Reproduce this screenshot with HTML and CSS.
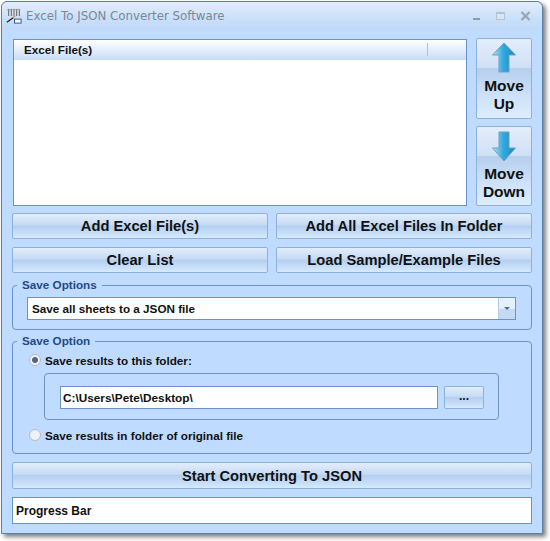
FILE: index.html
```html
<!DOCTYPE html>
<html lang="en">

<head>
    <meta charset="UTF-8">
    <title>Excel To JSON Converter Software</title>
    <link rel="stylesheet" href="styles.css">
</head>

<body>
    <div class="window">
        <div class="title-bar">
            <svg class="app-icon" width="16" height="16" viewBox="0 0 18 18">
                <path d="M3 1v8M6 1v8M9 1v8M12 1v8M15 1v8" stroke="#555" stroke-width="1"/>
                <path d="M1 2h15" stroke="#999" stroke-width="1"/>
                <path d="M8 7l3 2-3 3z" fill="#f09a20"/>
                <path d="M1 16l7-5" stroke="#222" stroke-width="1.4"/>
                <rect x="9.5" y="12.5" width="7.5" height="4.5" fill="#fff" stroke="#1c4f8c"/>
            </svg>
            <span class="title-text">Excel To JSON Converter Software</span>
            <div class="window-controls">
                <svg width="10" height="10" viewBox="0 0 10 10"><rect x="1" y="7" width="7" height="2" fill="#8d9bae"/></svg>
                <svg width="10" height="10" viewBox="0 0 10 10"><rect x="0.5" y="1.5" width="8" height="7" fill="#dbe6f5" stroke="#b4c2d4"/><rect x="0" y="1" width="9" height="2" fill="#b4c2d4"/></svg>
                <svg width="11" height="10" viewBox="0 0 11 10"><path d="M1.5 1l8 8M9.5 1l-8 8" stroke="#96a4b6" stroke-width="2.2"/></svg>
            </div>
        </div>

        <div class="content">
            <div class="list-row">
                <div class="file-list">
                    <div class="list-header"><span>Excel File(s)</span></div>
                </div>
                <div class="move-buttons">
                    <button class="btn move-btn">
                        <svg width="26" height="32" viewBox="0 0 26 32">
                            <defs>
                                <linearGradient id="arrowFill" x1="0" x2="1" y1="0" y2="0">
                                    <stop offset="0" stop-color="#b5e6f6"/>
                                    <stop offset="0.45" stop-color="#35aade"/>
                                    <stop offset="1" stop-color="#1487c4"/>
                                </linearGradient>
                            </defs>
                            <path d="M13 1L24.5 13H18V30H8V13H1.500z" fill="url(#arrowFill)" stroke="#6f9fc2"/>
                        </svg>
                        <span>Move<br>Up</span>
                    </button>
                    <button class="btn move-btn">
                        <svg width="26" height="32" viewBox="0 0 26 32">
                            <path d="M13 31L24.5 18H18V2H8V18H1.500z" fill="url(#arrowFill)" stroke="#6f9fc2"/>
                        </svg>
                        <span>Move<br>Down</span>
                    </button>
                </div>
            </div>

            <div class="button-grid">
                <button class="btn">Add Excel File(s)</button>
                <button class="btn">Add All Excel Files In Folder</button>
                <button class="btn">Clear List</button>
                <button class="btn">Load Sample/Example Files</button>
            </div>

            <fieldset class="group options-group">
                <legend>Save Options</legend>
                <div class="select-box">
                    <span class="select-value">Save all sheets to a JSON file</span>
                    <span class="select-arrow"></span>
                </div>
            </fieldset>

            <fieldset class="group folder-group">
                <legend>Save Option</legend>
                <label class="radio-row"><span class="radio checked"></span>Save results to this folder:</label>
                <div class="path-box">
                    <div class="path-input">C:\Users\Pete\Desktop\</div>
                    <button class="btn browse-btn">...</button>
                </div>
                <label class="radio-row"><span class="radio"></span>Save results in folder of original file</label>
            </fieldset>

            <button class="btn start-btn">Start Converting To JSON</button>
            <div class="progress-bar">Progress Bar</div>
        </div>
    </div>
</body>

</html>
```
FILE: styles.css
```css
html,
body {
    margin: 0;
    padding: 0;
    background-color: #fff;
}

body {
    width: 550px;
    height: 541px;
    overflow: hidden;
    font-family: "Liberation Sans", Arial, sans-serif;
}

.window {
    width: 542px;
    height: 533px;
    margin: 1px 0 0 1px;
    box-sizing: border-box;
    background-color: #bfdbff;
    border: 1px solid #5f7ea6;
    border-radius: 6px 6px 0 0;
    box-shadow: 3px 3px 4px rgba(60, 60, 60, 0.65);
}

.title-bar {
    display: flex;
    align-items: center;
    height: 28px;
    padding: 0 11px 0 4px;
    background: linear-gradient(to bottom, #e2edfb, #c9dff9 60%, #c0d9f9);
    border-radius: 6px 6px 0 0;
    box-sizing: border-box;
}

.app-icon {
    margin-right: 4px;
}

.title-text {
    font-family: "DejaVu Sans", sans-serif;
    font-size: 11.8px;
    color: #7b8796;
}

.window-controls {
    margin-left: auto;
    display: flex;
    align-items: center;
    gap: 14px;
}

.content {
    padding: 8px 10px 0 10px;
}

.list-row {
    display: flex;
    justify-content: space-between;
    margin-bottom: 7px;
    height: 168px;
}

.file-list {
    width: 454px;
    margin-left: 1px;
    height: 167px;
    margin-top: 1px;
    box-sizing: border-box;
    background-color: #fff;
    border: 1px solid #6b93c9;
}

.list-header {
    height: 20px;
    box-sizing: border-box;
    padding: 3px 0 0 10px;
    font-size: 11.7px;
    font-weight: bold;
    background: linear-gradient(to bottom, #fff, #e6f0fc 45%, #c6dcf7);
    color: #111;
    position: relative;
}

.list-header::after {
    content: "";
    position: absolute;
    right: 38px;
    top: 3px;
    height: 13px;
    width: 1px;
    background-color: #a9c3e4;
}

.move-buttons {
    display: flex;
    flex-direction: column;
    gap: 7px;
    width: 56px;
}

.btn {
    display: block;
    padding: 0;
    box-sizing: border-box;
    font-family: "Liberation Sans", Arial, sans-serif;
    font-size: 14.7px;
    font-weight: bold;
    color: #111;
    border: 1px solid #8fb0da;
    border-radius: 2px;
    background: linear-gradient(to bottom, #e2edfb, #c6dbf5 45%, #b5cfef 50%, #c6def8 80%, #d8eafd);
}

.move-btn {
    height: 81px;
    display: flex;
    flex-direction: column;
    align-items: center;
    padding-top: 3px;
    font-size: 15.500px;
    line-height: 18px;
    background: linear-gradient(to bottom, #e4eefb, #cfe0f6 37%, #b6cfee 37%, #cfe3f9 75%, #dcedfe);
}

.move-btn svg {
    margin-bottom: 3px;
}

.move-btn + .move-btn {
    height: 80px;
}

.button-grid {
    display: grid;
    grid-template-columns: 256px 256px;
    grid-auto-rows: 26px;
    column-gap: 8px;
    row-gap: 8px;
}

.group {
    margin: 0;
    padding: 0;
    min-width: 0;
    box-sizing: border-box;
    border: 1px solid #6b93c9;
    border-radius: 4px;
}

.group legend {
    padding: 0 5px;
    font-size: 11.7px;
    font-weight: bold;
    color: #1f4a85;
    line-height: 14px;
}

.options-group {
    height: 52px;
    margin-top: 5px;
    padding: 5px 15px 0 14px;
}

.options-group legend {
    margin-left: -10px;
}

.select-box {
    display: flex;
    align-items: center;
    height: 23px;
    box-sizing: border-box;
    background-color: #fff;
    border: 1px solid #6b93c9;
}

.select-value {
    flex: 1;
    padding-left: 4px;
    font-size: 11.7px;
    font-weight: bold;
    color: #111;
}

.select-arrow {
    width: 16px;
    height: 21px;
    border-left: 1px solid #b4cbe6;
    background: linear-gradient(to bottom, #e6f0fb 50%, #c4d9f2 50%);
    position: relative;
}

.select-arrow::after {
    content: "";
    position: absolute;
    left: 5px;
    top: 9px;
    border-left: 3px solid transparent;
    border-right: 3px solid transparent;
    border-top: 3px solid #4a6d9c;
}

.folder-group {
    height: 120px;
    margin-top: 4px;
    padding: 4px 32px 0 13px;
}

.folder-group legend {
    margin-left: -9px;
}

.radio-row {
    display: flex;
    align-items: center;
    height: 16px;
    font-size: 11.7px;
    font-weight: bold;
    color: #111;
}

.radio {
    width: 12px;
    height: 12px;
    margin: 0 4px 0 3px;
    box-sizing: border-box;
    border: 1px solid #b4bcc6;
    border-radius: 50%;
    background: #eef1f5;
}

.radio.checked {
    background: radial-gradient(circle, #55657a 0, #55657a 2.5px, #eef1f5 3.5px);
}

.path-box {
    display: flex;
    gap: 6px;
    margin: 5px 0 7px 18px;
    height: 47px;
    padding: 12px 14px 0 15px;
    box-sizing: border-box;
    border: 1px solid #6b93c9;
    border-radius: 4px;
}

.path-input {
    width: 378px;
    height: 23px;
    padding: 4px 0 0 2px;
    box-sizing: border-box;
    font-size: 11.8px;
    font-weight: bold;
    color: #111;
    background-color: #fff;
    border: 1px solid #6b93c9;
}

.browse-btn {
    width: 40px;
    height: 23px;
    padding-bottom: 3px;
    font-size: 12px;
}

.start-btn {
    width: 520px;
    height: 27px;
    margin-top: 8px;
}

.progress-bar {
    width: 520px;
    height: 27px;
    margin-top: 8px;
    padding: 6px 0 0 3px;
    box-sizing: border-box;
    font-size: 12px;
    font-weight: bold;
    color: #111;
    background-color: #fff;
    border: 1px solid #6b93c9;
}
```
